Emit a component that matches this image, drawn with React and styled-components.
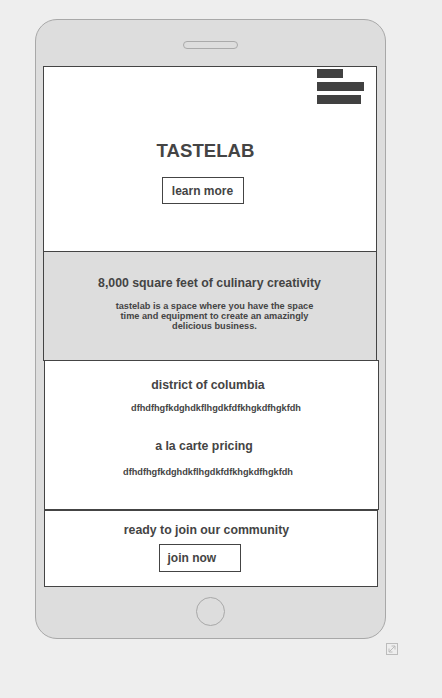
import React from 'react';
import styled, { createGlobalStyle } from 'styled-components';

const GlobalStyle = createGlobalStyle`
  * { box-sizing: border-box; }
  body {
    margin: 0;
    background-color: #eeeeee;
    font-family: "Liberation Sans", Arial, sans-serif;
    color: #444444;
  }
`;

const Page = styled.div`
  padding: 19px 0 0 35px;
`;

const Stage = styled.div`
  width: 363px;
  display: flex;
  flex-direction: column;
  align-items: flex-start;
`;

const Phone = styled.div`
  width: 351px;
  height: 620px;
  background-color: #dddddd;
  border: 1px solid #a8a8a8;
  border-radius: 22px;
  display: flex;
  flex-direction: column;
  align-items: center;
`;

const Speaker = styled.div`
  width: 55px;
  height: 8px;
  margin: 21px 0 17px;
  border: 1px solid #aaaaaa;
  border-radius: 4px;
`;

const Screen = styled.div`
  width: 336px;
  display: flex;
  flex-direction: column;
  align-items: flex-start;
`;

const Hero = styled.section`
  width: 334px;
  height: 186px;
  background-color: #ffffff;
  border: 1px solid #444444;
  display: flex;
  flex-direction: column;
  align-items: center;
  padding: 2px 8px 0 0;
`;

const MenuRow = styled.div`
  align-self: stretch;
  display: flex;
  justify-content: flex-end;
  padding-right: 4px;
`;

const Burger = styled.div`
  width: 47px;
  display: flex;
  flex-direction: column;
  gap: 4px;
`;

const Bar = styled.div`
  width: ${(p) => p.$w}px;
  height: 9px;
  background-color: #414141;
`;

const Title = styled.h1`
  margin: 36px 0 0;
  font-size: 18.6px;
  line-height: 21px;
  font-weight: bold;
  color: #444444;
`;

const OutlineButton = styled.button`
  width: 82px;
  height: ${(p) => p.$h}px;
  margin: ${(p) => p.$m};
  padding: 0 0 0 ${(p) => p.$pl}px;
  background: #ffffff;
  border: 1px solid #444444;
  font-family: "Liberation Sans", Arial, sans-serif;
  font-size: 12px;
  font-weight: bold;
  color: #444444;
  text-align: ${(p) => (p.$pl ? 'left' : 'center')};
`;

const Info = styled.section`
  width: 334px;
  height: 110px;
  margin-top: -1px;
  background-color: #dddddd;
  border: 1px solid #444444;
  padding-top: 24px;
  display: flex;
  flex-direction: column;
  align-items: center;
`;

const Heading = styled.h2`
  margin: ${(p) => p.$m || '0'};
  font-size: 12.3px;
  line-height: 14px;
  font-weight: bold;
  color: #444444;
  transform: translateX(${(p) => p.$shift || 0}px);
`;

const Blurb = styled.p`
  width: 214px;
  margin: 11px 0 0;
  padding-left: 10px;
  font-size: 9.2px;
  line-height: 10px;
  font-weight: bold;
  text-align: center;
  color: #444444;
`;

const Features = styled.section`
  width: 335px;
  height: 150px;
  margin: -1px 0 0 1px;
  background-color: #ffffff;
  border: 1px solid #444444;
  padding-top: 17px;
  display: flex;
  flex-direction: column;
  align-items: center;
`;

const Detail = styled.p`
  margin: ${(p) => p.$m};
  font-size: 9.2px;
  line-height: 11px;
  font-weight: bold;
  color: #444444;
  transform: translateX(${(p) => p.$shift || 0}px);
`;

const Cta = styled.section`
  width: 334px;
  height: 77px;
  margin: 0 0 0 1px;
  background-color: #ffffff;
  border: 1px solid #444444;
  padding-top: 12px;
  display: flex;
  flex-direction: column;
  align-items: center;
`;

const HomeButton = styled.div`
  width: 29px;
  height: 29px;
  margin-top: 10px;
  border: 1px solid #a8a8a8;
  border-radius: 50%;
`;

const ExpandIcon = styled.svg`
  align-self: flex-end;
  margin-top: 4px;
`;

export default function App() {
  return (
    <Page>
      <GlobalStyle />
      <Stage>
        <Phone>
          <Speaker />
          <Screen>
            <Hero>
              <MenuRow>
                <Burger>
                  <Bar $w={26} />
                  <Bar $w={47} />
                  <Bar $w={44} />
                </Burger>
              </MenuRow>
              <Title>TASTELAB</Title>
              <OutlineButton $h={27} $m="16px 6px 0 0">learn more</OutlineButton>
            </Hero>
            <Info>
              <Heading>8,000 square feet of culinary creativity</Heading>
              <Blurb>
                tastelab is a space where you have the space time and equipment to create an amazingly delicious business.
              </Blurb>
            </Info>
            <Features>
              <Heading $shift={-3}>district of columbia</Heading>
              <Detail $m="11px 0 0" $shift={5}>dfhdfhgfkdghdkflhgdkfdfkhgkdfhgkfdh</Detail>
              <Heading $m="25px 0 0" $shift={-7}>a la carte pricing</Heading>
              <Detail $m="14px 0 0" $shift={-3}>dfhdfhgfkdghdkflhgdkfdfkhgkdfhgkfdh</Detail>
            </Features>
            <Cta>
              <Heading $shift={-4}>ready to join our community</Heading>
              <OutlineButton $h={28} $pl={8} $m="7px 22px 0 0">join now</OutlineButton>
            </Cta>
          </Screen>
          <HomeButton />
        </Phone>
        <ExpandIcon width="12" height="12" viewBox="0 0 12 12" fill="none" stroke="#bcbcbc" strokeWidth="1">
          <rect x="0.5" y="0.5" width="11" height="11" />
          <path d="M3 9 L9 3 M5.5 3 H9 V6.5 M3 5.5 V9 H6.5" />
        </ExpandIcon>
      </Stage>
    </Page>
  );
}
